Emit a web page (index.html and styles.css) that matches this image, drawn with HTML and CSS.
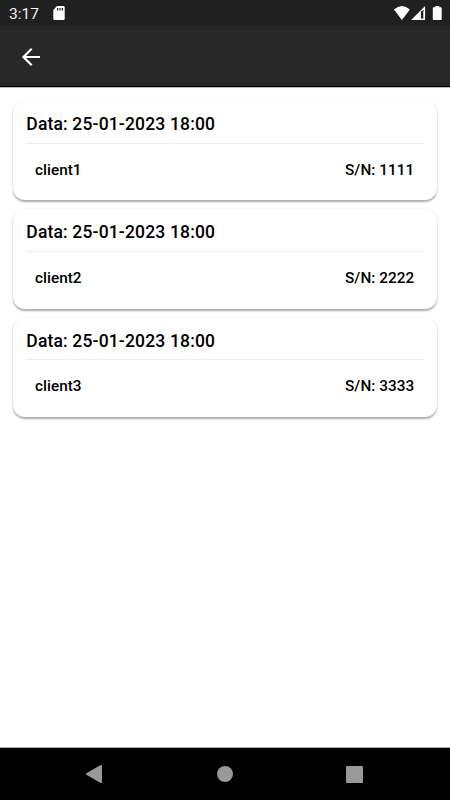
FILE: index.html
```html
<!DOCTYPE html>
<html lang="en">
<head>
<meta charset="utf-8">
<title>Clients</title>
<link rel="stylesheet" href="styles.css">
</head>
<body>
<div class="screen">
  <div class="status">
    <span class="clock">3:17</span>
    <svg class="sd" width="12" height="14" viewBox="0 0 12 14"><path fill="#fff" fill-rule="evenodd" d="M4 0H10.5Q11.7 0 11.7 1.2V12.8Q11.7 14 10.5 14H1.5Q.3 14 .3 12.8V4ZM4 2V4.5H5.2V2ZM6.4 2V4.5H7.6V2ZM8.8 2V4.5H10V2Z"/></svg>
    <svg class="signals" width="50" height="16" viewBox="0 0 50 16"><path fill="#fff" d="M-.1 3.5Q7.900-3.500 15.900 3.500L7.900 14ZM31.100 0V14H17.100Z"/><path fill="#202020" d="M26.900 5.500L30 4V12.500H26.900Z"/><path fill="#fff" d="M29.300 5H30V12.500H29.300ZM41.300 0H45.300V1.300H46.900Q47.700 1.300 47.700 2.100V13.200Q47.700 14 46.900 14H39.600Q38.800 14 38.800 13.200V2.100Q38.800 1.300 39.600 1.300H41.300Z"/></svg>
  </div>
  <header class="appbar">
    <svg width="20" height="20" viewBox="0 0 20 20"><path fill="none" stroke="#fff" stroke-width="2.200" d="M19 10H3M10.700 1.800L2.500 10L10.700 18.200"/></svg>
  </header>
  <main class="list">
    <section class="card"><h2>Data: 25-01-2023 18:00</h2><div class="row"><span>client1</span><span>S/N: 1111</span></div></section>
    <section class="card"><h2>Data: 25-01-2023 18:00</h2><div class="row"><span>client2</span><span>S/N: 2222</span></div></section>
    <section class="card"><h2>Data: 25-01-2023 18:00</h2><div class="row"><span>client3</span><span>S/N: 3333</span></div></section>
  </main>
  <nav class="nav">
    <svg width="18" height="20" viewBox="0 0 18 20"><path fill="#999" d="M1.400 9.300L15.600 1.100Q17 .5 17 2V18Q17 19.500 15.600 18.900L1.400 10.700Q.4 10 1.400 9.300Z"/></svg>
    <span class="home"></span>
    <span class="recent"></span>
  </nav>
</div>
</body>
</html>
```
FILE: styles.css
```css
* { box-sizing: border-box; }
body { margin: 0; font-family: Roboto, "Liberation Sans", sans-serif; color: #000; }
svg { display: block; }
.screen { display: flex; flex-direction: column; width: 450px; height: 800px; background: #fff; overflow: hidden; }
.status { height: 26px; flex: none; display: flex; align-items: flex-start; background: #202020; padding: 6px 0 0 9px; }
.clock { width: 43.500px; font-size: 15.500px; line-height: 17px; color: #f1f1f1; }
.signals { margin: 0 6px 0 auto; overflow: visible; }
.appbar { height: 61px; flex: none; display: flex; align-items: center; padding: 1.500px 0 0 20.500px; background: #282828; border-bottom: 1px solid #000; box-shadow: 0 1px 0 #bbb; }
.list { flex: 1; display: flex; flex-direction: column; gap: 9px; padding: 14px 13px 0; }
.card { height: 99.250px; padding: 0 13.300px; border-radius: 12px; background: #fff; box-shadow: 0 1.500px 2px rgba(0,0,0,.32), 0 0 1px rgba(0,0,0,.04); }
.card h2 { height: 42.500px; margin: 0; border-bottom: 1px solid #ececec; font-size: 17.500px; font-weight: 500; line-height: 46px; letter-spacing: .16px; }
.row { display: flex; justify-content: space-between; padding: 0 9.500px 0 8.700px; font-size: 15.300px; font-weight: 500; line-height: 53px; letter-spacing: .05px; }
.nav { height: 52px; flex: none; display: flex; align-items: center; justify-content: space-between; padding: 0 87px 0 85px; background: #000; box-shadow: 0 -1px 0 #b0b0b0; }
.home { width: 16px; height: 16px; margin-left: 1px; border-radius: 50%; background: #999; }
.recent { width: 17px; height: 17px; border-radius: 1px; background: #999; }
```
